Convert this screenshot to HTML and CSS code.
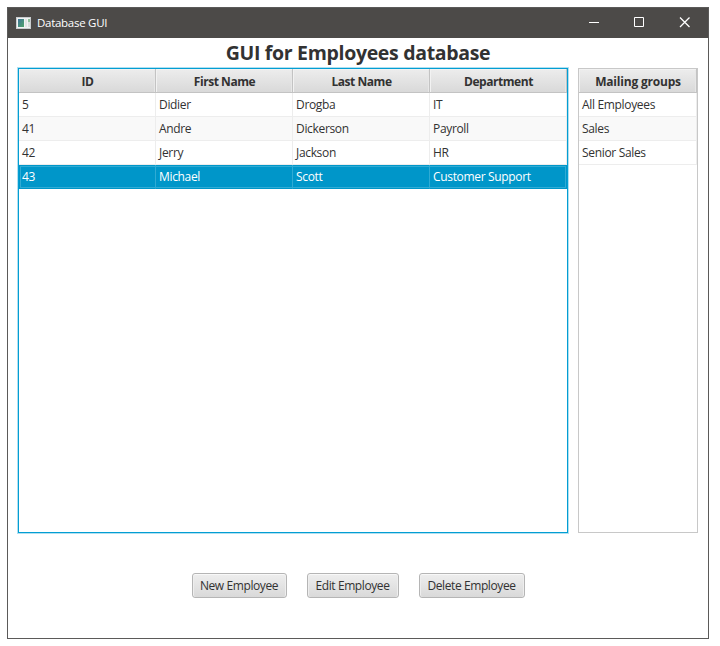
FILE: index.html
```html
<!DOCTYPE html>
<html lang="en">
<head>
<meta charset="utf-8">
<title>Database GUI</title>
<link rel="stylesheet" href="styles.css">
</head>
<body>
<div class="window">
  <header class="titlebar">
    <svg class="app-icon" width="15" height="12" viewBox="0 0 15 12">
      <defs><linearGradient id="g" x1="0" y1="0" x2="1" y2="1"><stop offset="0" stop-color="#3f7398"/><stop offset="1" stop-color="#4fa56b"/></linearGradient></defs>
      <rect width="15" height="12" fill="#c9cdcf"/>
      <rect x="1" y="1" width="13" height="10" fill="#f1f3f3"/>
      <rect x="2" y="2" width="6" height="8" fill="url(#g)"/>
      <rect x="9" y="2" width="2" height="8" fill="#e0e5e5"/>
      <rect x="12" y="2" width="2" height="3" fill="#8fc09c"/>
      <rect x="12" y="5" width="2" height="5" fill="#d9dede"/>
    </svg>
    <span class="caption">Database GUI</span>
    <svg class="controls" width="135" height="30" viewBox="0 0 135 30">
      <path d="M16 14.500h10M61.500 9.500h9v9h-9z" fill="none" stroke="#fff"/>
      <path d="M107 9.500l9.500 9.500M116.500 9.500l-9.500 9.500" fill="none" stroke="#fff" stroke-width="1.300"/>
    </svg>
  </header>
  <main class="content">
    <h1>GUI for Employees database</h1>
    <div class="tables">
      <section class="table employees">
        <div class="row head"><b>ID</b><b>First Name</b><b>Last Name</b><b>Department</b></div>
        <div class="row"><span>5</span><span>Didier</span><span>Drogba</span><span>IT</span></div>
        <div class="row odd"><span>41</span><span>Andre</span><span>Dickerson</span><span>Payroll</span></div>
        <div class="row"><span>42</span><span>Jerry</span><span>Jackson</span><span>HR</span></div>
        <div class="row selected"><span>43</span><span>Michael</span><span>Scott</span><span>Customer Support</span></div>
      </section>
      <section class="table groups">
        <div class="row head"><b>Mailing groups</b></div>
        <div class="row"><span>All Employees</span></div>
        <div class="row odd"><span>Sales</span></div>
        <div class="row"><span>Senior Sales</span></div>
      </section>
    </div>
    <div class="actions">
      <button class="new">New Employee</button>
      <button class="edit">Edit Employee</button>
      <button class="delete">Delete Employee</button>
    </div>
  </main>
</div>
</body>
</html>
```
FILE: styles.css
```css
* { box-sizing: border-box; }
body {
  margin: 0;
  padding: 7px;
  background: #fff;
  color: #323232;
  font: 12px/16px "Open Sans", "Noto Sans", sans-serif;
  letter-spacing: -0.33px;
}
.window {
  width: 702px;
  height: 632px;
  border: 1px solid #5b5a59;
  background: #fff;
}
.titlebar {
  display: flex;
  align-items: center;
  height: 30px;
  padding-left: 8px;
  background: #4c4a48;
  color: #fff;
}
.caption { margin-left: 6px; font-size: 11.5px; letter-spacing: -0.28px; }
.controls { margin-left: auto; }
.content { padding: 0 10px; }
h1 {
  height: 30px;
  margin: 0;
  font-size: 19.500px;
  line-height: 30px;
  text-align: center;
  letter-spacing: -0.32px;
}
.tables { display: flex; gap: 10px; }
.table { height: 465px; border: 1px solid #c8c8c8; }
.employees {
  width: 550px;
  border-color: #039ed3;
  box-shadow: 0 0 0 1px #b0e0f1;
}
.groups { width: 120px; }
.row { display: flex; height: 24px; }
.row > * {
  width: 137px;
  padding: 4px 0 0 3px;
  border-right: 1px solid #ededed;
  border-bottom: 1px solid #ededed;
  white-space: nowrap;
}
.groups .row > * { width: 118px; }
.odd { background: #f9f9f9; }
.head > b {
  padding: 5px 0 0 1px;
  border-color: #c3c3c3;
  background: linear-gradient(#ededed, #d9d9d9);
  box-shadow: inset 1px 1px #f2f2f2, inset -1px 0 #e7e7e7;
  letter-spacing: -0.45px;
  text-align: center;
}
.groups .head > b { letter-spacing: -0.2px; }
.selected {
  background: #0096c9;
  box-shadow: inset 0 0 0 1px #0096c9, inset 0 0 0 2px #30abd4;
  color: #fff;
}
.selected > * { border-right-color: #30abd4; border-bottom-color: transparent; }
.selected > :last-child { border-right-color: transparent; }
.actions { display: flex; justify-content: center; gap: 20px; margin-top: 40px; }
button {
  height: 25px;
  padding: 1px 0 0;
  border: 1px solid #b5b5b5;
  border-radius: 3px;
  background: linear-gradient(#eee, #d9d9d9);
  box-shadow: inset 0 1px #f8f8f8, inset 1px 0 #eee, inset -1px 0 #eee;
  color: #323232;
  font: inherit;
  letter-spacing: -0.4px;
}
.new { width: 95px; }
.edit { width: 92px; }
.delete { width: 106px; }
```
